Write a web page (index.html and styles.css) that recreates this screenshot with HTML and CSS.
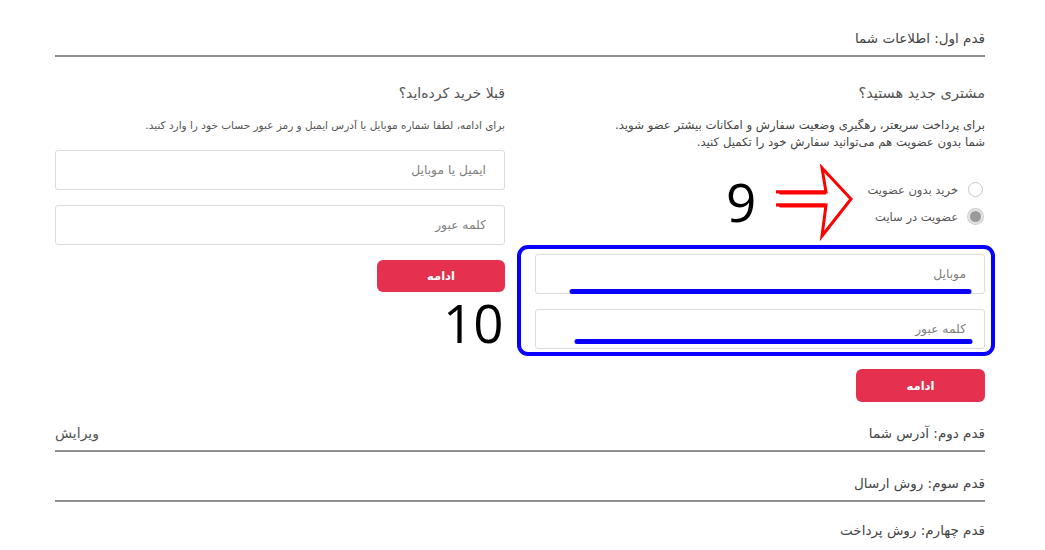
FILE: index.html
```html
<!DOCTYPE html>
<html lang="fa">
<head>
<meta charset="utf-8">
<title>Checkout</title>
<link rel="stylesheet" href="styles.css">
</head>
<body>
<div class="page">
  <div class="checkout">
    <div class="step"><span>قدم اول: اطلاعات شما</span></div>
    <div class="columns">
      <section class="col">
        <h3 class="col-title">مشتری جدید هستید؟</h3>
        <p class="col-desc">برای پرداخت سریعتر، رهگیری وضعیت سفارش و امکانات بیشتر عضو شوید.<br>شما بدون عضویت هم می‌توانید سفارش خود را تکمیل کنید.</p>
        <div class="radios">
          <label class="radio"><span class="dot"></span><span>خرید بدون عضویت</span></label>
          <label class="radio"><span class="dot checked"></span><span>عضویت در سایت</span></label>
        </div>
        <div class="fields fields-new">
          <input class="field" type="text" placeholder="موبایل">
          <input class="field" type="password" placeholder="کلمه عبور">
        </div>
        <button class="btn btn-new">ادامه</button>
      </section>
      <section class="col">
        <h3 class="col-title title-old">قبلا خرید کرده‌اید؟</h3>
        <p class="col-desc small">برای ادامه، لطفا شماره موبایل یا آدرس ایمیل و رمز عبور حساب خود را وارد کنید.</p>
        <div class="fields fields-old">
          <input class="field" type="text" placeholder="ایمیل یا موبایل">
          <input class="field" type="password" placeholder="کلمه عبور">
        </div>
        <button class="btn btn-old">ادامه</button>
      </section>
    </div>
    <div class="step step-next"><span>قدم دوم: آدرس شما</span><span class="edit">ویرایش</span></div>
    <div class="step"><span>قدم سوم: روش ارسال</span></div>
    <div class="step step-last"><span>قدم چهارم: روش پرداخت</span></div>
  </div>

  <svg class="annot" width="1045" height="550" viewBox="0 0 1045 550" xmlns="http://www.w3.org/2000/svg">
    <rect x="519" y="247" width="474" height="107" rx="9" ry="9" fill="none" stroke="#0a00ff" stroke-width="4"/>
    <line x1="572" y1="291.5" x2="969" y2="291.5" stroke="#0a00ff" stroke-width="5" stroke-linecap="round"/>
    <line x1="577" y1="341.5" x2="970" y2="341.5" stroke="#0a00ff" stroke-width="5" stroke-linecap="round"/>
    <path d="M776 192 L826 192 L822 168 L851 199 L822 236 L826 205 L776 205" fill="none" stroke="#ff0000" stroke-width="3" stroke-linejoin="miter"/>
    <path d="M776 190.5 L826 190.5 L826 194.5 L780 194.5 Z" fill="#ff0000"/>
    <path d="M776 203.5 L826 203.5 L826 207.5 L780 207.5 Z" fill="#ff0000"/>
    <text class="num" x="726" y="222">9</text>
    <text class="num" x="443" y="343">10</text>
  </svg>
</div>
</body>
</html>
```
FILE: styles.css
```css
* { box-sizing: border-box; }
body {
  margin: 0;
  background: #fff;
  font-family: "DejaVu Sans", "Noto Sans", sans-serif;
}
.page {
  position: relative;
  width: 1045px;
  height: 550px;
  overflow: hidden;
}
.checkout {
  direction: rtl;
  width: 930px;
  margin-left: 55px;
  padding-top: 7px;
}
.step {
  display: flex;
  justify-content: space-between;
  padding: 21px 0 7px;
  border-bottom: 2px solid #8e8e8e;
  font-size: 13.5px;
  line-height: 20px;
  color: #444;
}
.step-last { border-bottom: none; padding-top: 18px; }
.edit { color: #555; font-size: 14px; }
.columns {
  display: flex;
  gap: 30px;
  margin-top: 26px;
}
.col {
  width: 450px;
  display: flex;
  flex-direction: column;
}
.col-title {
  margin: 0;
  font-size: 14.5px;
  font-weight: normal;
  line-height: 20px;
  color: #555;
}
.col-title.title-old { font-size: 14px; }
.col-desc {
  margin: 14px 0 0;
  font-size: 11.7px;
  line-height: 17px;
  color: #444;
}
.col-desc.small { font-size: 10.5px; color: #555; }
.radios {
  margin-top: 25px;
  display: flex;
  flex-direction: column;
}
.radio {
  display: flex;
  align-items: center;
  gap: 10px;
  height: 27px;
  font-size: 11.5px;
  color: #555;
}
.dot {
  width: 15px;
  height: 15px;
  border-radius: 50%;
  border: 1px solid #c8c8c8;
  background: #fff;
  margin-right: 2px;
}
.dot.checked {
  background: #9a9a9a;
  border: 2px solid #e2e2e2;
  box-shadow: 0 0 0 1px #cfcfcf;
}
.fields {
  display: flex;
  flex-direction: column;
  gap: 15px;
}
.fields-new { margin-top: 24px; }
.fields-old { margin-top: 16px; }
.field {
  width: 450px;
  height: 40px;
  border: 1px solid #dcdcdc;
  border-radius: 3px;
  padding: 0 18px;
  font-family: "DejaVu Sans", sans-serif;
  font-size: 12.3px;
  color: #444;
  direction: rtl;
  background: #fff;
}
.field::placeholder { color: #7e7e7e; }
.btn {
  align-self: flex-start;
  border: none;
  border-radius: 6px;
  background: #e5304f;
  color: #fff;
  font-family: "DejaVu Sans", sans-serif;
  font-weight: bold;
  font-size: 11.5px;
}
.btn-new { margin-top: 20px; width: 129px; height: 33px; }
.btn-old { margin-top: 15px; width: 128px; height: 32px; }
.annot {
  position: absolute;
  left: 0;
  top: 0;
  pointer-events: none;
}
.num {
  font-family: "Open Sans", "DejaVu Sans", sans-serif;
  font-size: 53px;
  fill: #000;
}
```
